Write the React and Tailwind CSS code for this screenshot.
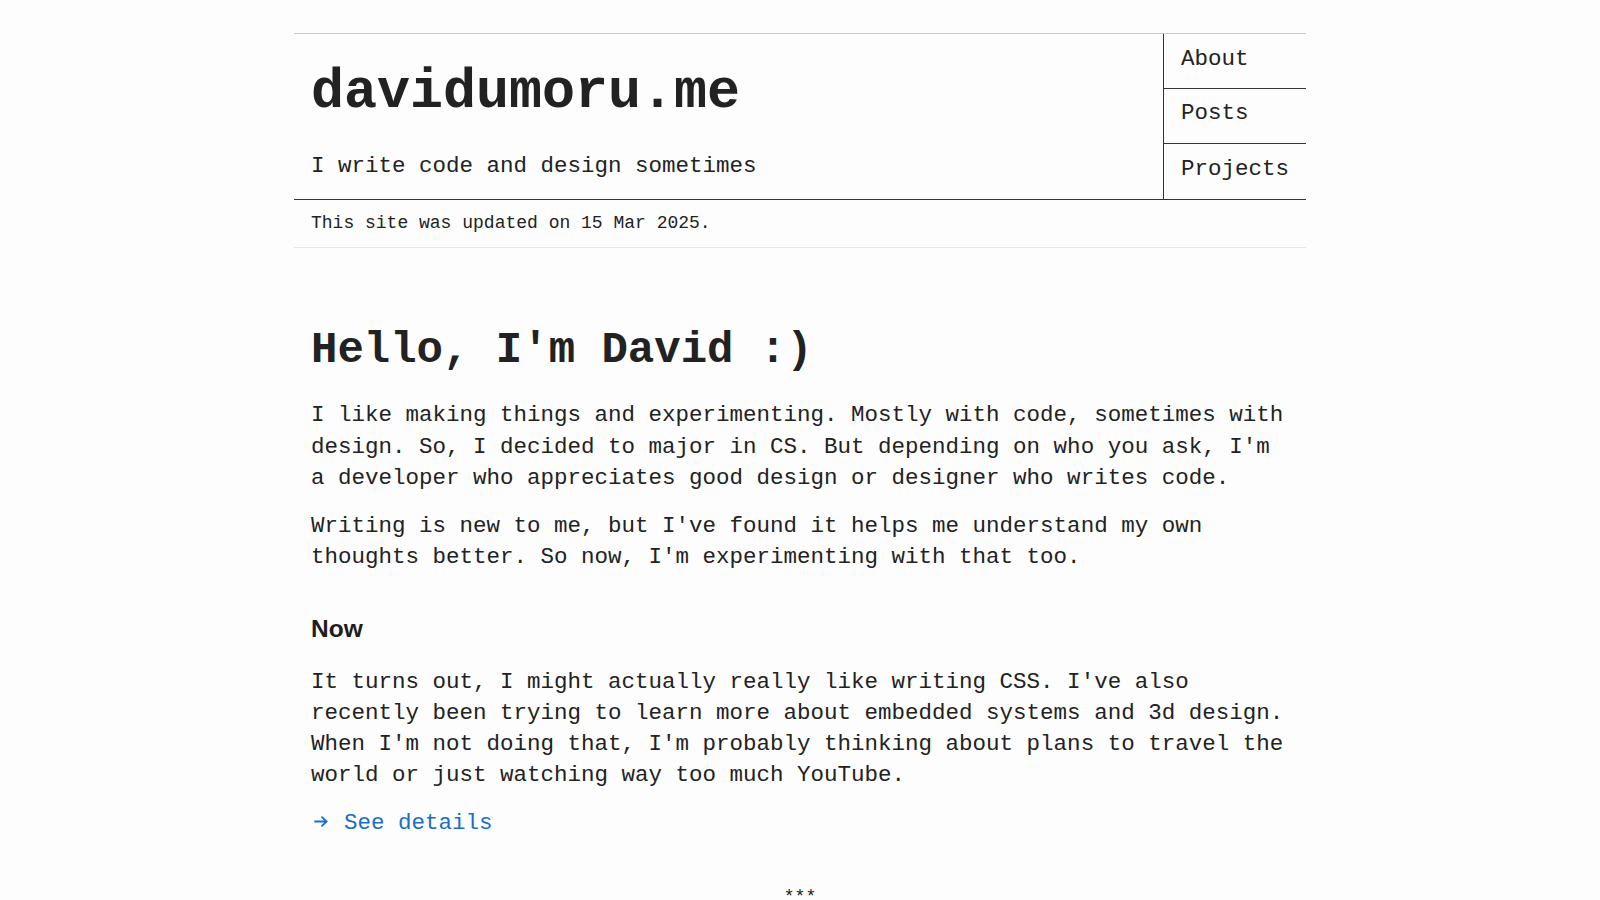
export default function App() {
  const mono = { fontFamily: '"Liberation Mono", "DejaVu Sans Mono", monospace' };
  return (
    <div className="min-h-screen bg-[#fdfdfd] text-[#222]" style={mono}>
      <div className="mx-auto w-[1012px] pt-[33px]">
        <header className="flex border-t border-b border-t-[#c9c9c9] border-b-[#333]">
          <div className="flex-1 px-[17px] pt-[31px] pb-[16px]">
            <h1 className="text-[55px] leading-[55px] font-bold tracking-normal">davidumoru.me</h1>
            <p className="mt-[31px] text-[22.5px] leading-[31px]">I write code and design sometimes</p>
          </div>
          <nav className="w-[143px] border-l border-[#333] flex flex-col">
            <a className="h-[55px] border-b border-[#333] flex items-center pl-[17px] pb-[2px] text-[22.5px]">About</a>
            <a className="h-[55px] border-b border-[#333] flex items-center pl-[17px] pb-[4px] text-[22.5px]">Posts</a>
            <a className="h-[55px] flex items-center pl-[17px] pb-[4px] text-[22.5px]">Projects</a>
          </nav>
        </header>
        <div className="h-[48px] flex items-center px-[17px] border-b border-[#e6e6e6] text-[18px]">
          This site was updated on 15 Mar 2025.
        </div>
        <main className="px-[17px]">
          <h2 className="mt-[75px] text-[44px] leading-[54px] font-bold">Hello, I'm David :)</h2>
          <p className="mt-[23px] text-[22.5px] leading-[31.5px]">
            I like making things and experimenting. Mostly with code, sometimes with design. So, I decided to major in CS. But depending on who you ask, I'm a developer who appreciates good design or designer who writes code.
          </p>
          <p className="mt-[16px] text-[22.5px] leading-[31.5px]">
            Writing is new to me, but I've found it helps me understand my own thoughts better. So now, I'm experimenting with that too.
          </p>
          <h3 className="mt-[40px] text-[24.5px] leading-[30px] font-bold text-[#1e1e1e]" style={{ fontFamily: '"Liberation Sans", Arial, sans-serif' }}>Now</h3>
          <p className="mt-[23px] text-[22.5px] leading-[31.2px]">
            It turns out, I might actually really like writing CSS. I've also recently been trying to learn more about embedded systems and 3d design. When I'm not doing that, I'm probably thinking about plans to travel the world or just watching way too much YouTube.
          </p>
          <a className="mt-[17px] text-[22.5px] leading-[31.5px] text-[#1a6fc4] flex items-center">
            <span className="w-[33px] flex items-center">
              <svg className="ml-[3px] -mt-[6px]" width="14" height="11" viewBox="0 0 14 11" fill="none" stroke="currentColor" strokeWidth="1.8" strokeLinecap="round" strokeLinejoin="round">
                <path d="M1 5.5h11.5" />
                <path d="M8 1.2l4.5 4.3L8 9.8" />
              </svg>
            </span>
            <span>See details</span>
          </a>
          <div className="mt-[47px] text-center text-[18px] leading-[20px]">***</div>
        </main>
      </div>
    </div>
  );
}
